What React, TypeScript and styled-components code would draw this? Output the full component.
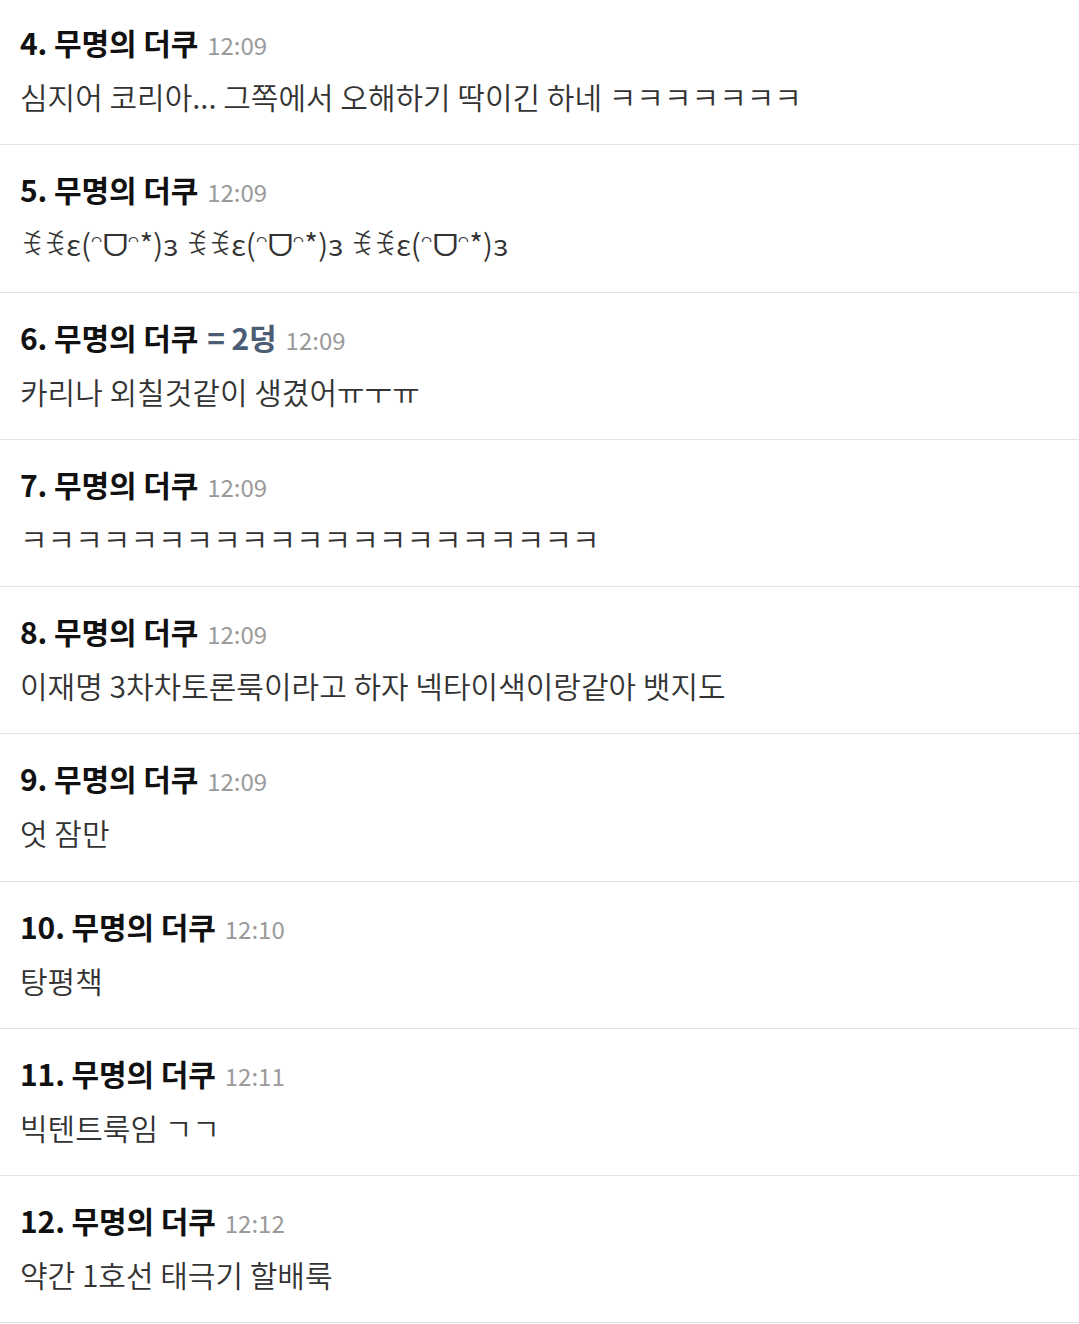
import React from 'react'
import styled, { createGlobalStyle } from 'styled-components'

const GlobalStyle = createGlobalStyle`
  html, body {
    margin: 0;
    padding: 0;
    background: #ffffff;
  }
  body {
    font-family: 'Noto Sans CJK KR', 'Noto Sans', 'DejaVu Sans', sans-serif;
    -webkit-font-smoothing: antialiased;
  }
`

type Comment = {
  no: number
  time: string
  text: string
  tag?: string
}

const laugh = 'ꉂꉂε(ᵔᗜᵔ*)з'

const comments: Comment[] = [
  { no: 4, time: '12:09', text: '심지어 코리아... 그쪽에서 오해하기 딱이긴 하네 ㅋㅋㅋㅋㅋㅋㅋ' },
  { no: 5, time: '12:09', text: `${laugh} ${laugh} ${laugh}` },
  { no: 6, time: '12:09', text: '카리나 외칠것같이 생겼어ㅠㅜㅠ', tag: '= 2덩' },
  { no: 7, time: '12:09', text: 'ㅋ'.repeat(21) },
  { no: 8, time: '12:09', text: '이재명 3차차토론룩이라고 하자 넥타이색이랑같아 뱃지도' },
  { no: 9, time: '12:09', text: '엇 잠만' },
  { no: 10, time: '12:10', text: '탕평책' },
  { no: 11, time: '12:11', text: '빅텐트룩임 ㄱㄱ' },
  { no: 12, time: '12:12', text: '약간 1호선 태극기 할배룩' },
]

export default function App() {
  return (
    <>
      <GlobalStyle />
      <List>
        {comments.map((c) => (
          <Row key={c.no}>
            <Header>
              <Author>{c.no}. 무명의 더쿠</Author>
              {c.tag && <Tag>{c.tag}</Tag>}
              <Time>{c.time}</Time>
            </Header>
            <Body>{c.text}</Body>
          </Row>
        ))}
      </List>
    </>
  )
}

const List = styled.ul`
  list-style: none;
  margin: -2px 0 0;
  padding: 0;
`

const Row = styled.li`
  display: flex;
  flex-direction: column;
  gap: 15px;
  padding: 26px 20px 27.25px;
  border-bottom: 1px solid #e2e2e2;
`

const Header = styled.div`
  display: flex;
  align-items: baseline;
  gap: 9px;
  height: 36px;
  line-height: 36px;
`

const Author = styled.span`
  font-size: 30px;
  font-weight: 700;
  color: #111111;
  letter-spacing: -0.1px;
`

const Tag = styled.span`
  font-size: 30px;
  font-weight: 700;
  color: #4b5d74;
  letter-spacing: -0.1px;
`

const Time = styled.span`
  font-size: 24px;
  font-weight: 400;
  color: #9a9a9a;
`

const Body = styled.div`
  font-size: 30px;
  line-height: 42px;
  font-weight: 350;
  color: #333333;
  white-space: nowrap;
`
